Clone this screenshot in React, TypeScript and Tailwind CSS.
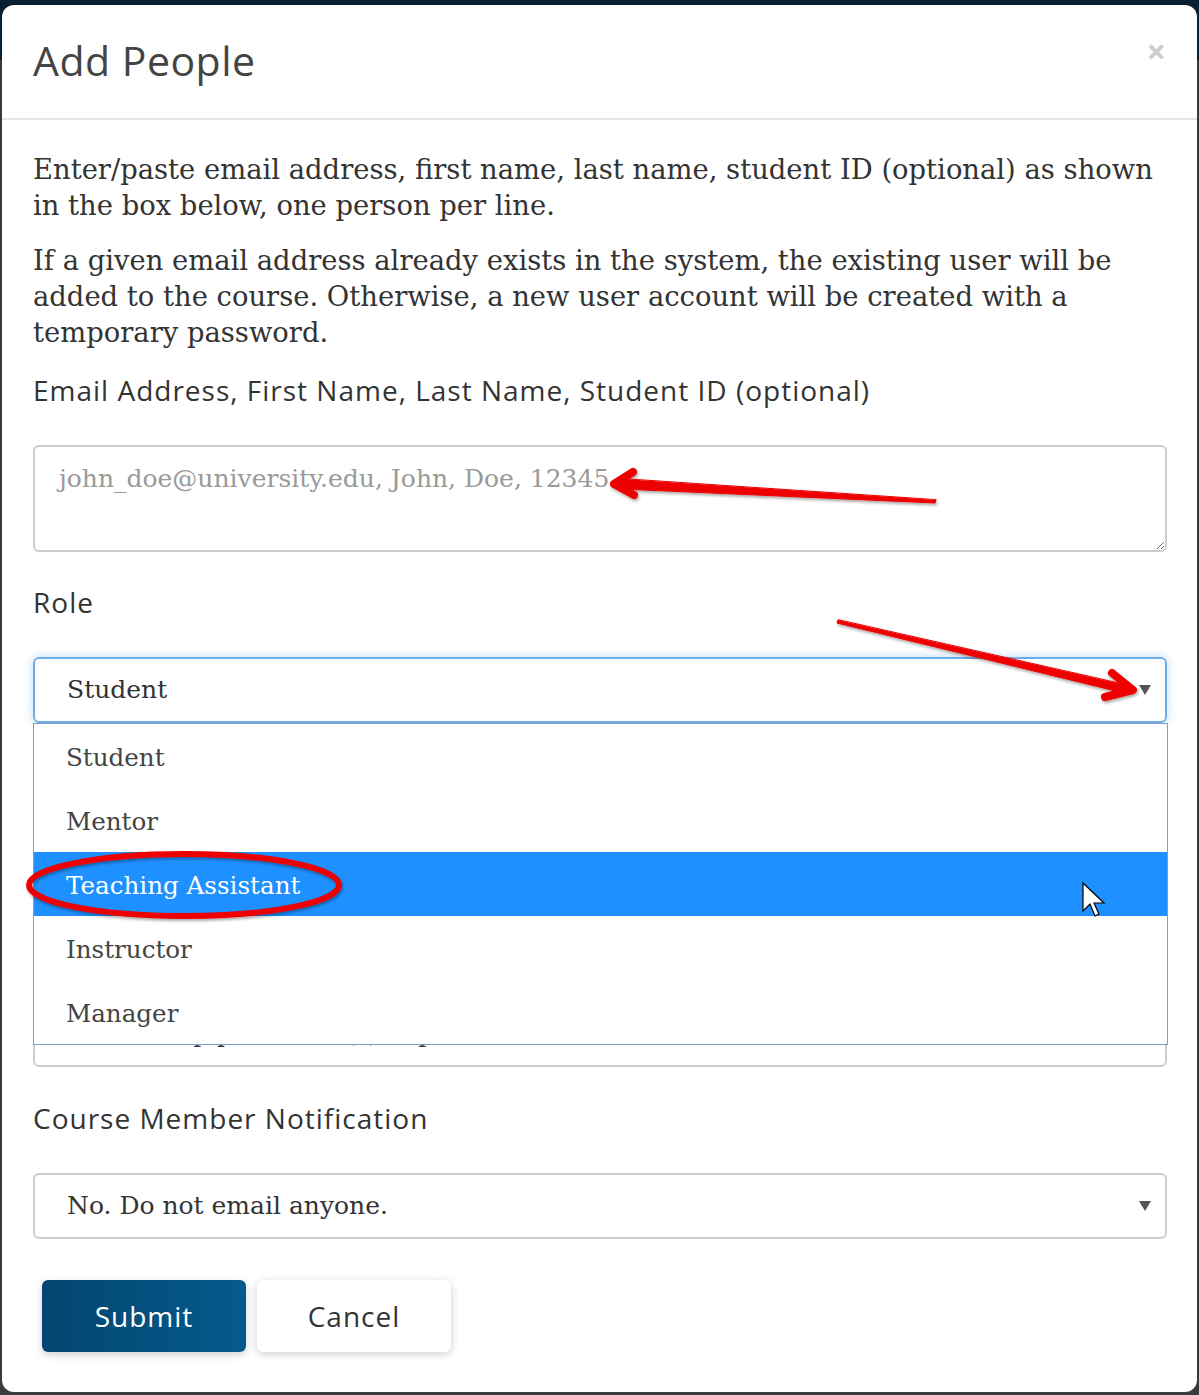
import React from 'react';

const sans = { fontFamily: '"Open Sans", "DejaVu Sans", sans-serif' };
const serif = { fontFamily: '"DejaVu Serif", "Liberation Serif", serif' };

const roles = ['Student', 'Mentor', 'Teaching Assistant', 'Instructor', 'Manager'];

function Caret() {
  return (
    <svg width="12" height="10" viewBox="0 0 12 10" className="shrink-0">
      <path d="M0 0 L12 0 L6 10 Z" fill="#555" />
    </svg>
  );
}

function Label({ children, className = '' }: { children: React.ReactNode; className?: string }) {
  return (
    <label className={`text-[28px] leading-[36px] tracking-[1px] text-[#333] ${className}`} style={sans}>
      {children}
    </label>
  );
}

function SelectBox({ value }: { value: string }) {
  return (
    <div
      className="mt-[37px] flex h-[66px] w-[1134px] items-center justify-between rounded-md border-2 border-[#cccccc] pl-[32px] pr-[14px] text-[25px] text-[#333]"
      style={serif}
    >
      <span>{value}</span>
      <Caret />
    </div>
  );
}

export default function App() {
  return (
    <div className="relative min-h-[1395px] w-[1199px] overflow-hidden bg-[#3b3b3b]">
      {/* backdrop strip */}
      <div className="absolute left-0 top-0 h-[60px] w-full bg-[#0b1f33]" />

      {/* Modal */}
      <div className="relative ml-[2px] mt-[5px] flex h-[1387px] w-[1195px] flex-col rounded-xl bg-white">
        {/* Header */}
        <div className="flex h-[115px] items-start justify-between border-b-2 border-[#e5e5e5] pl-[31px] pr-[31px]">
          <h1 className="mt-[30px] text-[41px] leading-[50px] tracking-[0.5px] text-[#444]" style={sans}>
            Add People
          </h1>
          <span className="mt-[26px] text-[34px] font-bold leading-[40px] text-[#cccccc]" style={sans}>
            ×
          </span>
        </div>

        {/* Body */}
        <div className="flex flex-col px-[31px] pt-[32px]">
          <p className="text-[27.4px] leading-[36px] text-[#333]" style={serif}>
            Enter/paste email address, first name, last name, student ID (optional) as shown in the box below,
            one person per line.
          </p>
          <p className="mt-[19px] text-[27.4px] leading-[36px] text-[#333]" style={serif}>
            If a given email address already exists in the system, the existing user will be added to the
            course. Otherwise, a new user account will be created with a temporary password.
          </p>

          <Label className="mt-[21px]">Email Address, First Name, Last Name, Student ID (optional)</Label>
          <textarea
            className="mt-[37px] h-[107px] w-[1134px] resize-y rounded-md border-2 border-[#cccccc] px-[24px] py-[14px] text-[25px] leading-[36px] text-[#333] outline-none placeholder:text-[#999]"
            style={serif}
            placeholder="john_doe@university.edu, John, Doe, 12345"
          />

          <Label className="mt-[32px]">Role</Label>
          <div className="relative mt-[37px] w-[1134px]">
            <div
              className="flex h-[66px] items-center justify-between rounded-md border-2 border-[#6eaee6] pl-[32px] pr-[14px] text-[25px] text-[#333] shadow-[0_0_10px_rgba(102,175,233,0.45)]"
              style={serif}
            >
              <span>Student</span>
              <Caret />
            </div>

            {/* Open dropdown */}
            <ul className="absolute left-0 top-[66px] z-10 w-[1135px] border border-[#7f9cc9] bg-white" style={serif}>
              {roles.map((r) => (
                <li
                  key={r}
                  className={`flex h-[64px] items-center pl-[32px] pt-[4px] text-[24.6px] ${
                    r === 'Teaching Assistant' ? 'bg-[#1e90ff] text-white' : 'text-[#444]'
                  }`}
                >
                  {r}
                </li>
              ))}
            </ul>
          </div>

          {/* fields hidden behind the open list */}
          <Label className="mt-[33px]">Section</Label>
          <SelectBox value="None" />
          <Label className="mt-[33px]">Temporary Password</Label>
          <SelectBox value="Show temp password (s) in p" />

          <Label className="mt-[33px]">Course Member Notification</Label>
          <SelectBox value="No. Do not email anyone." />

          {/* Buttons */}
          <div className="mt-[41px] flex gap-[11px] pl-[9px]">
            <button
              className="h-[72px] w-[204px] rounded-md bg-gradient-to-r from-[#03466f] to-[#055a8c] text-[28px] tracking-[1px] text-white shadow-[0_3px_8px_rgba(0,0,0,0.18)]"
              style={sans}
            >
              Submit
            </button>
            <button
              className="h-[72px] w-[194px] rounded-md bg-white text-[28px] tracking-[1px] text-[#333] shadow-[0_2px_8px_rgba(0,0,0,0.2)]"
              style={sans}
            >
              Cancel
            </button>
          </div>
        </div>
      </div>

      {/* Annotations */}
      <svg className="pointer-events-none absolute left-0 top-0 z-20" width="1199" height="1395">
        <defs>
          <filter id="sh" x="-10%" y="-50%" width="120%" height="200%">
            <feDropShadow dx="1" dy="2" stdDeviation="1.5" floodColor="#000" floodOpacity="0.35" />
          </filter>
        </defs>
        <g filter="url(#sh)" fill="#ee0000" stroke="#ee0000" strokeLinecap="round" strokeLinejoin="round">
          {/* arrow to placeholder */}
          <polygon points="936,500 935,503 622,489 623,479" strokeWidth="1" />
          <polyline points="633,472 614,484 634,495" fill="none" strokeWidth="8" />
          {/* arrow to caret */}
          <polygon points="838,620 837,623 1124,693 1126,685" strokeWidth="1" />
          <polyline points="1112,673 1133,690 1105,697" fill="none" strokeWidth="8" />
          {/* circle round Teaching Assistant */}
          <ellipse cx="184" cy="885" rx="155" ry="31" fill="none" strokeWidth="6" />
        </g>
        {/* mouse pointer */}
        <path
          d="M1083 883 L1083 911 L1090 904 L1095 916 L1099 914 L1094 903 L1104 903 Z"
          fill="#fff"
          stroke="#000"
          strokeWidth="1.2"
        />
      </svg>
    </div>
  );
}
